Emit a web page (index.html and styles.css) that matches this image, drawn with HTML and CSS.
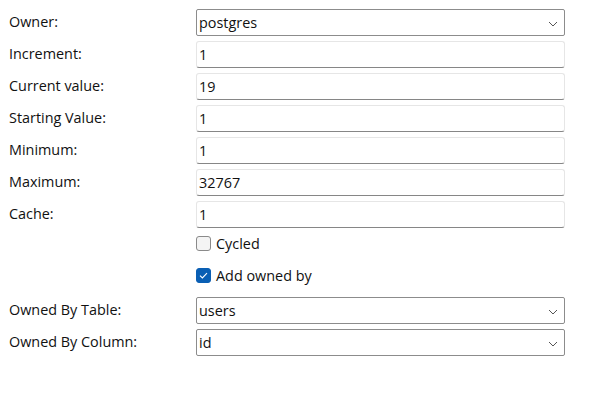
FILE: index.html
```html
<!DOCTYPE html>
<html>
<head>
<meta charset="utf-8">
<link rel="stylesheet" href="styles.css">
</head>
<body>
<div class="form">
  <div class="label">Owner:</div>
  <div class="select"><span>postgres</span><svg class="chev" width="10" height="6" viewBox="0 0 10 6"><path d="M1 1 L5 5 L9 1" fill="none" stroke="#555" stroke-width="1"/></svg></div>

  <div class="label">Increment:</div>
  <div class="input">1</div>

  <div class="label">Current value:</div>
  <div class="input">19</div>

  <div class="label">Starting Value:</div>
  <div class="input">1</div>

  <div class="label">Minimum:</div>
  <div class="input">1</div>

  <div class="label">Maximum:</div>
  <div class="input">32767</div>

  <div class="label">Cache:</div>
  <div class="input">1</div>

  <div class="label"></div>
  <div class="check"><span class="box"></span><span>Cycled</span></div>

  <div class="label"></div>
  <div class="check"><span class="box on"><svg width="15" height="15" viewBox="0 0 15 15"><path d="M4 7.6 L6.4 10 L11 5.2" fill="none" stroke="#fff" stroke-width="1.1"/></svg></span><span>Add owned by</span></div>

  <div class="label">Owned By Table:</div>
  <div class="select"><span>users</span><svg class="chev" width="10" height="6" viewBox="0 0 10 6"><path d="M1 1 L5 5 L9 1" fill="none" stroke="#555" stroke-width="1"/></svg></div>

  <div class="label">Owned By Column:</div>
  <div class="select"><span>id</span><svg class="chev" width="10" height="6" viewBox="0 0 10 6"><path d="M1 1 L5 5 L9 1" fill="none" stroke="#555" stroke-width="1"/></svg></div>
</div>
</body>
</html>
```
FILE: styles.css
```css
html, body {
  margin: 0;
  background: #ffffff;
}
body {
  font-family: "Open Sans", "Noto Sans", sans-serif;
  font-size: 14.4px;
  color: #111111;
}
.form {
  display: grid;
  grid-template-columns: 187px 369px;
  grid-auto-rows: 27px;
  row-gap: 5px;
  padding: 9px 0 0 9px;
}
.label {
  display: flex;
  align-items: center;
  padding-bottom: 2px;
}
.input {
  box-sizing: border-box;
  border: 1px solid #e6e6e6;
  border-bottom-color: #868686;
  border-radius: 3px;
  display: flex;
  align-items: center;
  padding-left: 2px;
  background: #fff;
}
.select {
  box-sizing: border-box;
  border: 1px solid #8c8c8c;
  border-radius: 2px;
  display: flex;
  align-items: center;
  justify-content: space-between;
  padding: 0 6px 0 2px;
  background: #fff;
}
.chev {
  margin-top: 2px;
}
.check {
  display: flex;
  align-items: flex-start;
  gap: 5px;
}
.box {
  box-sizing: border-box;
  width: 15px;
  height: 15px;
  margin-top: 3px;
  border: 1px solid #8a8a8a;
  border-radius: 3px;
  background: #f4f4f4;
  display: flex;
}
.box.on {
  background: #0a5fb4;
  border-color: #0a5fb4;
}
.box.on svg {
  margin: -1px;
}
.check span:last-child {
  line-height: 21px;
}
```
